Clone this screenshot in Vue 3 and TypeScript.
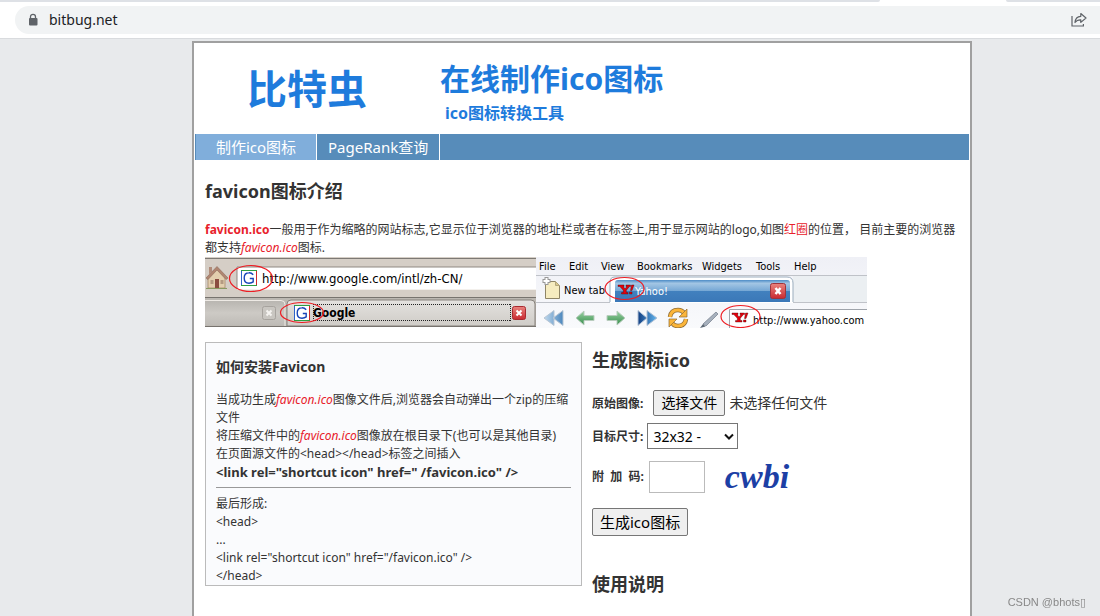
<script setup lang="ts">
import { ref } from 'vue'

const navItems = [
  { label: '制作ico图标', active: true },
  { label: 'PageRank查询', active: false },
]
const sizes = ['16x16 - ', '32x32 - ', '48x48 - ']
const size = ref('32x32 - ')
const code = ref('')
const fileName = ref('未选择任何文件')
const picker = ref<HTMLInputElement | null>(null)

const menu = [
  { label: 'File', x: 334 },
  { label: 'Edit', x: 364 },
  { label: 'View', x: 396 },
  { label: 'Bookmarks', x: 432 },
  { label: 'Widgets', x: 497 },
  { label: 'Tools', x: 551 },
  { label: 'Help', x: 589 },
]

function onPick(e: Event) {
  const files = (e.target as HTMLInputElement).files
  fileName.value = files && files.length ? files[0].name : '未选择任何文件'
}
</script>

<template>
  <div class="screen">
    <header class="browser">
      <div class="strip"><span class="strip-left"></span><span class="strip-right"></span></div>
      <div class="toolbar">
        <div class="omnibox">
          <svg class="lock" width="10" height="14" viewBox="0 0 10 14">
            <path d="M2.5 6V3.8a2.5 2.5 0 0 1 5 0V6" fill="none" stroke="#5f6368" stroke-width="1.3" />
            <rect x="1" y="5" width="8.5" height="7.6" rx="1" fill="#5f6368" />
          </svg>
          <span class="host">bitbug.net</span>
          <button class="share" type="button" aria-label="分享">
            <svg width="16" height="16" viewBox="0 0 16 16" fill="none" stroke="#5f6368" stroke-width="1.2">
              <path d="M1 4v10h11.4v-2" />
              <path d="M4 10.5C4.300 6.400 6.500 4.500 9.800 4.300V1.500L15 6l-5.200 4.400V7.800C7.300 7.700 5.500 8.400 4 10.500z" stroke-linejoin="round" />
            </svg>
          </button>
        </div>
      </div>
    </header>

    <main class="frame">
      <div class="banner">
        <div class="logo">比特虫</div>
        <div class="titles">
          <h1>在线制作ico图标</h1>
          <p>ico图标转换工具</p>
        </div>
      </div>

      <nav class="nav">
        <a v-for="n in navItems" :key="n.label" href="#" :class="{ active: n.active }">{{ n.label }}</a>
      </nav>

      <div class="content">
        <h2>favicon图标介绍</h2>
        <p class="intro">
          <strong class="red">favicon.ico</strong>一般用于作为缩略的网站标志,它显示位于浏览器的地址栏或者在标签上,用于显示网站的logo,如图<span class="red">红圈</span>的位置， 目前主要的浏览器都支持<em>favicon.ico</em>图标.
        </p>

        <svg class="demo" width="662" height="71" viewBox="0 0 662 71">
          <defs>
            <linearGradient id="tabGray" x1="0" y1="0" x2="0" y2="1">
              <stop offset="0" stop-color="#b9b6b1" /><stop offset=".5" stop-color="#cdcac5" /><stop offset="1" stop-color="#bebbb6" />
            </linearGradient>
            <linearGradient id="tabLight" x1="0" y1="0" x2="0" y2="1">
              <stop offset="0" stop-color="#e4e2df" /><stop offset="1" stop-color="#cfccc7" />
            </linearGradient>
            <linearGradient id="tabBlue" x1="0" y1="0" x2="0" y2="1">
              <stop offset="0" stop-color="#4d8cc6" /><stop offset=".15" stop-color="#a3c6e4" /><stop offset=".48" stop-color="#77a8d5" /><stop offset=".52" stop-color="#4180be" /><stop offset="1" stop-color="#3b78b8" />
            </linearGradient>
            <linearGradient id="closeRed" x1="0" y1="0" x2="0" y2="1">
              <stop offset="0" stop-color="#e9847e" /><stop offset="1" stop-color="#c92a31" />
            </linearGradient>
            <linearGradient id="pane" x1="0" y1="0" x2="0" y2="1">
              <stop offset="0" stop-color="#eff0f6" /><stop offset="1" stop-color="#f9fafc" />
            </linearGradient>
            <linearGradient id="paleBlue" x1="0" y1="0" x2="1" y2="0">
              <stop offset="0" stop-color="#c0d9ed" /><stop offset="1" stop-color="#4c87bd" />
            </linearGradient>
            <linearGradient id="deepBlue" x1="0" y1="0" x2="1" y2="0">
              <stop offset="0" stop-color="#123f83" /><stop offset="1" stop-color="#62b5ee" />
            </linearGradient>
            <linearGradient id="green" x1="0" y1="0" x2="0" y2="1">
              <stop offset="0" stop-color="#9bd3a4" /><stop offset="1" stop-color="#378e4c" />
            </linearGradient>
            <g id="gIcon">
              <rect width="16" height="16" fill="#fff" />
              <path d="M.5 0v16" stroke="#2f62c9" />
              <path d="M15.500 0v16" stroke="#cf2b2b" />
              <path d="M0 .5h16M0 15.500h16" stroke="#2f9e41" />
              <path d="M12.200 4.800C11 3.400 9.500 2.700 7.900 2.800 5.100 2.900 3.200 5 3.200 8s1.900 5.200 4.800 5.200c1.600 0 3.200-.5 4.200-1.300V8.500H8.800" fill="none" stroke="#1744b8" stroke-width="1.400" />
            </g>
            <g id="yIcon" fill="#e8000c">
              <path d="M0 0h6v1.500H5.200L7 4l2-2.500H8V0h4.500v1.500h-1L8.300 5.200V7.500H10V9H3.500V7.500h1.800V5.200L1.800 1.500H0z" stroke="#4a0606" stroke-width=".4" />
              <path d="M13.500 0H16l-2 5.500h-1.500zM11.500 7H14v2h-2.500z" stroke="#4a0606" stroke-width=".4" />
            </g>
          </defs>

          <!-- Address bar and tab row with the Google icon -->
          <rect width="331" height="70" fill="#d5cec6" />
          <path d="M0 1.500h331" stroke="#7d7974" />
          <rect x="32" y="10" width="299" height="22" fill="#fff" />
          <path d="M331 10H32v22" fill="none" stroke="#8f8982" />
          <path d="M32 32.500h299" stroke="#f3f0ec" />
          <path d="M3 20v11h17V20L12 12z" fill="#e3cfae" stroke="#a5896c" stroke-width=".8" />
          <path d="M1 21L12 9.500 23 21l-2 1.500-9-9.500-9 9.500z" fill="#b08570" stroke="#8c6c5c" stroke-width=".6" />
          <path d="M4 10h3v4.500l-3 3z" fill="#b18c79" />
          <path d="M10 22h4v9h-4z" fill="#8a4c40" /><path d="M5.500 23h3v4h-3zm10 0h3v4h-3z" fill="#b49a82" />
          <path d="M1 31.500h21" stroke="#8a9a62" />
          <rect y="40" width="331" height="30" fill="#bcb8b2" />
          <path d="M0 40.500h331" stroke="#77736e" />
          <path d="M0 44h76q4 0 4 4v20H0z" fill="url(#tabGray)" />
          <path d="M0 43.500h76q4 0 4 4V69" fill="none" stroke="#eeeae5" />
          <path d="M82 69V47q0-4 4-4h240q4 0 4 4v22z" fill="url(#tabLight)" stroke="#87827c" />
          <path d="M0 69.500h331" stroke="#77736e" />
          <rect x="57.500" y="49.500" width="13" height="13" rx="2" fill="#c9c6c1" stroke="#a7a39e" />
          <path d="M61.500 53.500l5 5m0-5l-5 5" stroke="#f5f3f0" stroke-width="2" />
          <path d="M108 47.500h198M108 63.500h198M108.500 47v17M305.500 47v17" fill="none" stroke="#222" stroke-dasharray="1 1" />
          <rect x="307.500" y="49.500" width="13" height="13" rx="2" fill="url(#closeRed)" stroke="#a92a30" />
          <path d="M311.500 53.500l5 5m0-5l-5 5" stroke="#fff" stroke-width="2" />
          <use href="#gIcon" x="36" y="13" />
          <use href="#gIcon" x="89" y="48" />
          <text x="57" y="26" class="url">http://www.google.com/intl/zh-CN/</text>
          <text x="108" y="60" class="tab-title">Google</text>
          <ellipse cx="46" cy="21.500" rx="21.500" ry="13" class="ring" />
          <ellipse cx="97" cy="55.500" rx="21.500" ry="10" class="ring" />

          <!-- Menu, tab row and toolbar with the Yahoo icon -->
          <rect x="331" width="331" height="71" fill="url(#pane)" />
          <path d="M331 18.500h331M331 45.500h331" stroke="#bfc2c8" />
          <rect x="588" y="19" width="74" height="26" fill="#ebeff2" />
          <text v-for="m in menu" :key="m.label" :x="m.x" y="13" class="ui">{{ m.label }}</text>
          <path d="M340.500 24.500h10l4 4v13h-14z" fill="#f6ecc0" stroke="#8f8566" />
          <path d="M350.500 24.500v4h4" fill="#d9c98d" stroke="#b4a77d" />
          <path d="M341.500 20v8M337.500 24h8" stroke="#999" stroke-width="4" /><path d="M341.500 21v6M338.500 24h6" stroke="#fff" stroke-width="2" />
          <text x="359" y="37" class="ui">New tab</text>
          <path d="M405 45V25q0-5 5-5h172q6 0 6 6v19" fill="#fff" stroke="#9badbd" />
          <path d="M410 45V26q0-3 3-3h169q3 0 3 3v19z" fill="url(#tabBlue)" />
          <path d="M405 45.500h183" stroke="#fff" />
          <rect x="565.500" y="26.500" width="15" height="15" rx="2" fill="url(#closeRed)" stroke="#9e343d" />
          <path d="M570.500 31l5 6m0-6l-5 6" stroke="#fff" stroke-width="2.500" />
          <use href="#yIcon" x="413" y="28" />
          <text x="430" y="38" class="ui white">Yahoo!</text>
          <ellipse cx="419.500" cy="31.500" rx="19.500" ry="11" class="ring" />

          <g stroke-width="1" stroke-linejoin="round">
            <path d="M349 53.500v15l-10-7.500zM358 53.500v15l-10-7.500z" fill="url(#paleBlue)" stroke="#b8c6d4" />
            <path d="M371 61l8-7v4.500h10v5h-10V68z" fill="url(#green)" stroke="#b9cdbe" />
            <path d="M420 61l-8-7v4.500h-10v5h10V68z" fill="url(#green)" stroke="#b9cdbe" />
            <path d="M433 53.500v15l9-7.500zM442 53.500v15l10-7.500z" fill="url(#deepBlue)" stroke="#b3c2d6" />
          </g>
          <g fill="none" stroke="#8e6c35" stroke-width="4.500">
            <path d="M465 60q1-7 8-7 4 0 6 3M481 62q-1 7-8 7-4 0-6-3" />
          </g>
          <g fill="none" stroke="#fbb53a" stroke-width="3">
            <path d="M465 60q1-7 8-7 4 0 6 3M481 62q-1 7-8 7-4 0-6-3" />
          </g>
          <path d="M482 52v8h-8zM464 70v-8h8z" fill="#fbb53a" stroke="#8e6c35" stroke-width=".7" />
          <path d="M498 67l13-12 2 2-12 12z" fill="#a6b0bd" stroke="#7d8794" stroke-width=".8" />
          <path d="M495 71l3-4 2.500 2.500z" fill="#5d6976" />
          <rect x="524" y="52" width="138" height="19" fill="#fff" />
          <path d="M524.500 71V52.500H662" fill="none" stroke="#9fa4ab" />
          <use href="#yIcon" x="527" y="56" />
          <text x="548" y="67" class="ui">http://www.yahoo.com</text>
          <ellipse cx="535.500" cy="59.500" rx="19.500" ry="11" class="ring" />
        </svg>

        <div class="columns">
          <section class="howto">
            <h3>如何安装Favicon</h3>
            <p>当成功生成<em>favicon.ico</em>图像文件后,浏览器会自动弹出一个zip的压缩文件</p>
            <p>将压缩文件中的<em>favicon.ico</em>图像放在根目录下(也可以是其他目录)</p>
            <p>在页面源文件的&lt;head&gt;&lt;/head&gt;标签之间插入</p>
            <p class="snippet"><strong>&lt;link rel="shortcut icon" href=" /favicon.ico" /&gt;</strong></p>
            <hr />
            <p>最后形成:</p>
            <p>&lt;head&gt;</p>
            <p>...</p>
            <p>&lt;link rel="shortcut icon" href="/favicon.ico" /&gt;</p>
            <p>&lt;/head&gt;</p>
          </section>

          <section class="make">
            <h2>生成图标ico</h2>
            <form @submit.prevent>
              <div class="row file-row">
                <label for="pic">原始图像:</label>
                <input id="pic" ref="picker" type="file" hidden @change="onPick" />
                <button class="choose" type="button" @click="picker?.click()">选择文件</button>
                <span class="file-name">{{ fileName }}</span>
              </div>
              <div class="row size-row">
                <label for="size">目标尺寸:</label>
                <span class="select-wrap">
                  <select id="size" v-model="size">
                    <option v-for="s in sizes" :key="s" :value="s">{{ s }}</option>
                  </select>
                  <svg width="10" height="7" viewBox="0 0 10 7"><path d="M1 1.500l4 4 4-4" fill="none" stroke="#111" stroke-width="2" /></svg>
                </span>
              </div>
              <div class="row code-row">
                <label for="code">附&nbsp; 加&nbsp; 码:</label>
                <input id="code" v-model="code" type="text" />
                <span class="captcha">cwbi</span>
              </div>
              <button class="submit" type="submit">生成ico图标</button>
            </form>
            <h2>使用说明</h2>
          </section>
        </div>
      </div>
    </main>
    <div class="mark">CSDN @bhots▯</div>
  </div>
</template>

<style>
body {
  background: #e8eaec;
}
</style>

<style scoped>
.screen {
  height: 100vh;
  overflow: hidden;
  display: flex;
  flex-direction: column;
  font-family: "Noto Sans", "Noto Sans CJK SC", sans-serif;
  font-size: 12px;
  line-height: 18px;
  color: #333;
}
h1, h2, h3, p { margin: 0; }
.browser { background: #fff; border-bottom: 1px solid #d9dbde; flex: none; }
.strip { display: flex; justify-content: space-between; height: 2px; }
.strip span { background: #dee1e6; }
.strip-left { width: 80%; border-bottom-right-radius: 4px; }
.strip-right { width: 94px; border-bottom-left-radius: 4px; }
.toolbar { padding: 4px 0 4px 15px; }
.omnibox {
  height: 28px;
  display: flex;
  align-items: center;
  background: #f1f3f4;
  border-radius: 14px 0 0 14px;
  padding: 0 13px;
}
.host {
  margin-left: 11px;
  flex: 1;
  font-size: 14px;
  color: #202124;
}
.share { display: flex; border: 0; padding: 0; background: none; }
.frame {
  flex: 1 0 auto;
  margin: 2px 128px 0 192px;
  padding: 1px;
  border: 2px solid #a0a0a0;
  border-bottom: 0;
  background: #fff;
}
.banner {
  height: 90px;
  display: flex;
  color: #1e7bdc;
  font-weight: bold;
}
.logo {
  margin-left: 52px;
  width: 193px;
  font-size: 40px;
  line-height: 90px;
}
.titles h1 { font-size: 30px; line-height: 40px; margin-top: 15px; }
.titles p { font-size: 16px; line-height: 28px; padding-left: 5px; }
.nav { display: flex; height: 26px; background: #578cba; padding-left: 1px; }
.nav a {
  padding: 0 11px;
  box-sizing: border-box;
  border-right: 1px solid #fff;
  color: #fff;
  font-size: 15px;
  line-height: 26px;
  text-align: center;
  text-decoration: none;
}
.nav a.active { background: #80aedb; min-width: 121px; }
.content { padding: 0 10px; }
h2 { font-size: 18px; line-height: 24px; }
.content > h2 { padding: 19px 0 18px; }
.red, em { color: #e8212b; }
.demo { display: block; }
.url { font: 13px "DejaVu Sans Condensed", "DejaVu Sans", sans-serif; fill: #000; }
.tab-title { font: bold 12px "DejaVu Sans Condensed", "DejaVu Sans", sans-serif; fill: #000; }
.ui { font: 11px "DejaVu Sans Condensed", "DejaVu Sans", sans-serif; fill: #000; }
.white { fill: #fff; }
.ring { fill: none; stroke: #ee1c23; stroke-width: 1.2; }
.columns { display: flex; gap: 10px; margin-top: 14px; align-items: flex-start; }
.howto {
  flex: 0 0 50%;
  box-sizing: border-box;
  border: 1px solid #bbb;
  background: #fafbfd;
  padding: 0 10px;
}
h3 { font-size: 14px; line-height: 20px; padding: 14px 0; }
.snippet { font-size: 13px; }
hr { margin: 6px 0 7px; border: 0; border-top: 1px solid #999; }
.make { flex: 1; padding-top: 6px; }
.row { display: flex; align-items: center; }
.row label { font-weight: bold; }
.file-row { margin-top: 18px; }
.file-row label, .size-row label { padding-top: 2px; }
.choose, .submit {
  font: 14px/20px "Noto Sans", "Noto Sans CJK SC", sans-serif;
  color: #000;
  background: #efefef;
  border: 1px solid #767676;
  border-radius: 2px;
  white-space: nowrap;
}
.choose { margin-left: 10px; padding: 2px 7px; }
.file-name { font-size: 14px; margin-left: 4px; }
.size-row { margin-top: 7px; }
.select-wrap { position: relative; margin-left: 4px; display: flex; }
select {
  appearance: none;
  width: 91px;
  height: 26px;
  padding: 0 5px;
  border: 1px solid #767676;
  border-radius: 0;
  background: #fff;
  font: 14px "Noto Sans", sans-serif;
  color: #000;
}
.select-wrap svg { position: absolute; right: 4px; top: 10px; pointer-events: none; }
.code-row { margin-top: 10px; height: 36px; }
.code-row input {
  width: 56px;
  height: 32px;
  margin-left: 5px;
  box-sizing: border-box;
  border: 1px solid #bbb;
  background: #fff;
}
.captcha {
  margin-left: 20px;
  font: italic bold 34px/32px "Liberation Serif", serif;
  color: #1c3fa5;
}
.submit { margin-top: 13px; padding: 3px 7px; font-size: 15px; }
form + h2 { margin-top: 36px; }
.mark {
  position: fixed;
  right: 14px;
  bottom: 6px;
  font: 11px/16px "Liberation Sans", "DejaVu Sans", sans-serif;
  color: #888;
}
</style>
